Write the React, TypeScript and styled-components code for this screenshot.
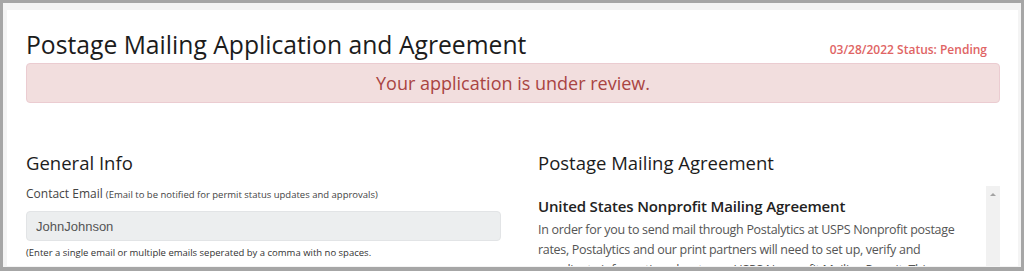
import { createGlobalStyle } from "styled-components";
import styled from "styled-components";

const GlobalStyle = createGlobalStyle`
  html, body {
    margin: 0;
    padding: 0;
    background: #a6a6a6;
  }
  * {
    box-sizing: border-box;
  }
`;

const App = () => {
  return (
    <>
      <GlobalStyle />
      <Frame>
        <Panel>
          <Header>
            <Title>Postage Mailing Application and Agreement</Title>
            <Status>03/28/2022 Status: Pending</Status>
          </Header>
          <Alert>Your application is under review.</Alert>

          <Columns>
            <Column>
              <SectionTitle>General Info</SectionTitle>
              <Label>
                Contact Email{" "}
                <Small>(Email to be notified for permit status updates and approvals)</Small>
              </Label>
              <Input type="text" value="JohnJohnson" disabled readOnly />
              <Help>
                (Enter a single email or multiple emails seperated by a comma with no spaces.
              </Help>
            </Column>

            <Column>
              <SectionTitle>Postage Mailing Agreement</SectionTitle>
              <ScrollBox>
                <ScrollContent>
                  <AgreementTitle>United States Nonprofit Mailing Agreement</AgreementTitle>
                  <Paragraph>
                    In order for you to send mail through Postalytics at USPS Nonprofit postage
                    rates, Postalytics and our print partners will need to set up, verify and
                    coordinate information about your USPS Nonprofit Mailing Permit. This
                    agreement outlines the process.
                  </Paragraph>
                </ScrollContent>
                <ScrollTrack>
                  <ArrowUp />
                </ScrollTrack>
              </ScrollBox>
            </Column>
          </Columns>
        </Panel>
      </Frame>
    </>
  );
};

export default App;

const Frame = styled.div`
  height: 100vh;
  overflow: hidden;
  border-style: solid;
  border-color: #a6a6a6;
  border-width: 3px 3px 4px 3px;
  background: #f4f4f4;
  padding: 7px 3px 1px 4px;
`;

const Panel = styled.div`
  height: 100%;
  overflow: hidden;
  background: #ffffff;
  padding: 0 18px 0 19px;
  font-family: "Open Sans", "Noto Sans", sans-serif;
  color: #333;
`;

const Header = styled.div`
  display: flex;
  justify-content: space-between;
  align-items: baseline;
  padding-top: 18px;
  padding-right: 13px;
`;

const Title = styled.h1`
  margin: 0;
  font-size: 24.7px;
  font-weight: 400;
  line-height: 34px;
  color: #1c1c1c;
`;

const Status = styled.span`
  font-size: 12px;
  font-weight: 600;
  color: #e06464;
`;

const Alert = styled.div`
  margin-top: 1px;
  height: 40px;
  display: flex;
  align-items: center;
  justify-content: center;
  background: #f2dede;
  border: 1px solid #ebccd1;
  border-radius: 4px;
  color: #a94442;
  font-size: 18px;
`;

const Columns = styled.div`
  display: grid;
  grid-template-columns: 475px 1fr;
  column-gap: 37px;
  margin-top: 47px;
`;

const Column = styled.div`
  display: flex;
  flex-direction: column;
  min-width: 0;
`;

const SectionTitle = styled.h3`
  margin: 0;
  font-size: 18.5px;
  font-weight: 400;
  line-height: 26px;
  color: #1c1c1c;
`;

const Label = styled.label`
  margin-top: 9px;
  font-size: 12px;
  line-height: 18px;
  color: #444;
`;

const Small = styled.span`
  font-size: 9.5px;
`;

const Input = styled.input`
  margin-top: 7px;
  width: 100%;
  height: 30px;
  padding: 0 9px;
  border: 1px solid #e2e4e6;
  border-radius: 4px;
  background: #eceeef;
  font-family: "Liberation Sans", Arial, sans-serif;
  font-size: 13px;
  color: #555;
`;

const Help = styled.div`
  margin-top: 4px;
  font-size: 9.5px;
  line-height: 16px;
  color: #333;
`;

const ScrollBox = styled.div`
  display: flex;
  margin-top: 10px;
`;

const ScrollContent = styled.div`
  flex: 1;
  padding-top: 9px;
  padding-right: 20px;
`;

const ScrollTrack = styled.div`
  width: 14px;
  height: 200px;
  background: #f1f1f1;
  display: flex;
  justify-content: center;
  padding-top: 7px;
`;

const ArrowUp = styled.div`
  width: 0;
  height: 0;
  border-left: 3px solid transparent;
  border-right: 3px solid transparent;
  border-bottom: 3px solid #a3a3a3;
`;

const AgreementTitle = styled.h4`
  margin: 0;
  font-size: 15px;
  font-weight: 600;
  letter-spacing: -0.15px;
  line-height: 22px;
  color: #222;
`;

const Paragraph = styled.p`
  margin: 3px 0 0;
  font-size: 12.5px;
  letter-spacing: -0.3px;
  line-height: 20px;
  color: #555;
`;
